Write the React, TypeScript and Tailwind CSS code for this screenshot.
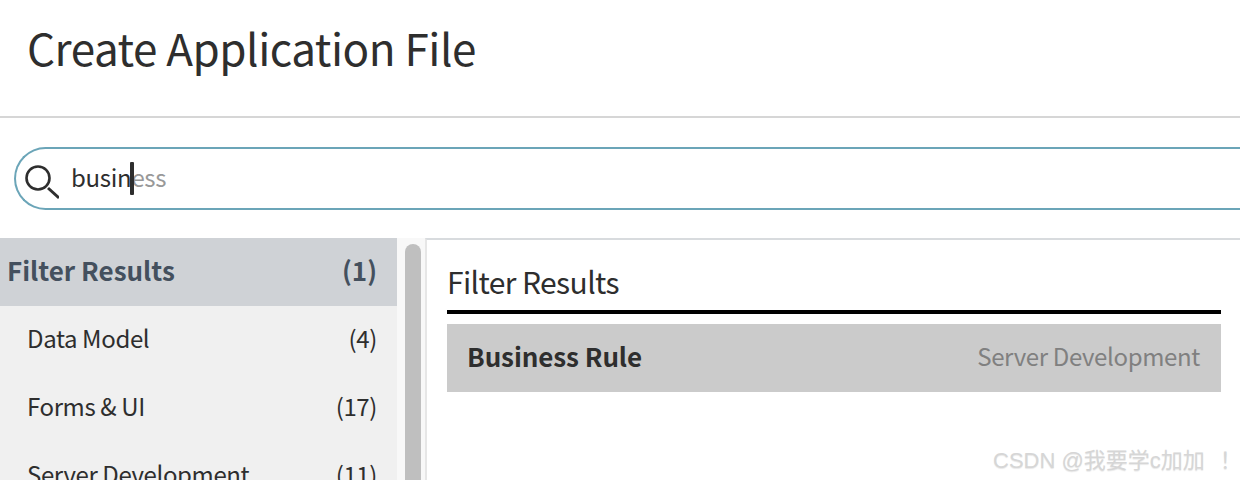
const rows = [
  { label: "Data Model", count: 4 },
  { label: "Forms & UI", count: 17 },
  { label: "Server Development", count: 11 },
];

function SearchBox() {
  return (
    <div className="ml-[14px] mt-[29px] flex h-[63px] items-center rounded-l-[32px] border-y-2 border-l-2 border-[#6ba5b8]">
      <svg width="38" height="44" viewBox="0 0 38 44" fill="none" className="ml-[5px] text-[#2e2e2e]">
        <circle cx="17" cy="21" r="11.5" stroke="currentColor" strokeWidth="2.6" />
        <path d="M27 31 L38 41" stroke="currentColor" strokeWidth="3" />
      </svg>
      <div className="relative -mt-[3px] ml-[12px] text-[24px] leading-none tracking-[-0.3px] text-[#2e2e2e]">
        busin<span className="text-[#999999]">ess</span>
        <span className="absolute left-[59px] top-[-3px] h-[33px] w-[4px] rounded-[1px] bg-[#2e2e2e]" />
      </div>
    </div>
  );
}

function Sidebar() {
  return (
    <div className="w-[397px] shrink-0 bg-[#f0f0f0]">
      <div className="flex h-[68px] items-center justify-between bg-[#cfd2d6] pb-[6px] pl-[7px] pr-[20px] text-[26px] font-bold text-[#44505e]">
        <span>Filter Results</span>
        <span>(1)</span>
      </div>
      {rows.map((row) => (
        <div key={row.label} className="flex h-[68px] items-center justify-between pb-[4px] pl-[27px] pr-[20px] text-[24px] tracking-[-0.38px] text-[#2e2e2e]">
          <span>{row.label}</span>
          <span>({row.count})</span>
        </div>
      ))}
    </div>
  );
}

function Results() {
  return (
    <div className="h-full flex-1 border-l-2 border-t-2 border-l-[#e6e6e6] border-t-[#d8dbde] pl-[20px] pr-[19px]">
      <h2 className="mt-[21px] h-[49px] text-[30px] leading-[40px] tracking-[-0.6px] text-[#2e2e2e]">Filter Results</h2>
      <div className="h-[4px] bg-black" />
      <div className="mt-[10px] flex h-[68px] items-center justify-between bg-[#cbcbcb] pb-[5px] pl-[20px] pr-[21px]">
        <span className="text-[26px] font-bold tracking-[-0.08px] text-[#2e2e2e]">Business Rule</span>
        <span className="text-[24px] tracking-[-0.35px] text-[#808080]">Server Development</span>
      </div>
    </div>
  );
}

export default function App() {
  return (
    <div className="relative h-[480px] w-[1240px] overflow-hidden bg-white font-['Noto_Sans_CJK_SC',sans-serif]">
      <div className="h-[118px] border-b-2 border-[#d6d6d6] pl-[27px] pt-[17px] text-[44px] leading-[60px] tracking-[-0.48px] text-[#2e2e2e]">
        Create Application File
      </div>
      <SearchBox />
      <div className="mt-[28px] flex h-[242px] overflow-hidden">
        <Sidebar />
        <div className="w-[28px] shrink-0 bg-[#f8f8f8] pl-[8px] pt-[6px]">
          <div className="h-full w-[16px] rounded-t-lg bg-[#bfbfbf]" />
        </div>
        <Results />
      </div>
      <div className="absolute left-[993px] top-[447px] whitespace-nowrap font-['Liberation_Sans','Noto_Sans_CJK_SC',sans-serif] text-[22px] leading-[28px] text-[#d6d6d6] [text-shadow:0_1px_1px_#e8e8e8]">
        CSDN @我要学c加加<span className="ml-[15px]">！</span>
      </div>
    </div>
  );
}
